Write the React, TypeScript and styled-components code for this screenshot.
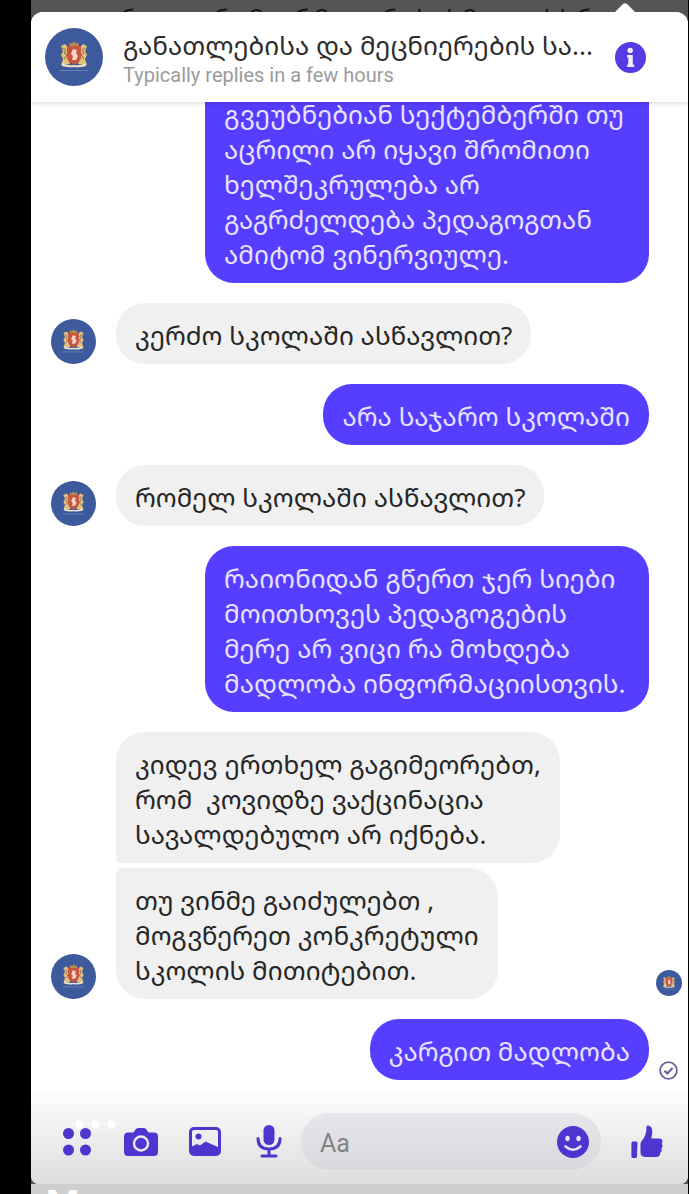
import React from "react";
import styled, { createGlobalStyle, css } from "styled-components";

const GlobalStyle = createGlobalStyle`
  * { box-sizing: border-box; }
  body {
    margin: 0;
    background: #000;
    font-family: "Noto Sans Georgian", Roboto, "Noto Sans", sans-serif;
  }
  button {
    border: 0;
    padding: 0;
    background: none;
    cursor: pointer;
  }
  svg { display: block; }
`;

const accent = "#4f35d0";

const Screen = styled.div`
  display: flex;
  flex-direction: column;
  min-height: 100vh;
  margin: 0 1px 0 31px;
  background: #555;
`;

const BackdropTop = styled.div`
  position: relative;
  height: 12px;
`;

const BackdropLine = styled.div`
  height: 12px;
  padding-left: 88px;
  overflow: hidden;
  white-space: nowrap;
  color: #161616;
  font-size: 26px;
  line-height: 36px;
`;

const Caret = styled.svg`
  position: absolute;
  right: 53px;
  bottom: 0;
`;

const Panel = styled.main`
  display: flex;
  flex: 1;
  flex-direction: column;
  overflow: hidden;
  border-radius: 12px 12px 8px 8px;
  background: #fff;
`;

const Header = styled.header`
  position: relative;
  z-index: 1;
  display: flex;
  align-items: center;
  gap: 20px;
  height: 90px;
  padding: 0 42px 0 14px;
  background: #fff;
  box-shadow: 0 1px 5px rgba(0, 0, 0, 0.16);
`;

const Heading = styled.div`
  flex: 1;
  min-width: 0;
`;

const Title = styled.h1`
  margin: 0;
  overflow: hidden;
  white-space: nowrap;
  color: #2c2c2c;
  font-size: 26px;
  font-weight: 400;
  line-height: 35px;
`;

const Subtitle = styled.p`
  margin: 0;
  color: #9b9b9b;
  font-family: Roboto, sans-serif;
  font-size: 20px;
  line-height: 24px;
`;

const Chat = styled.section`
  display: flex;
  flex: 1;
  flex-direction: column;
  gap: 20px;
  overflow: hidden;
  padding-bottom: 10px;
`;

const Row = styled.div<{ $sent?: boolean; $scrolled?: boolean }>`
  display: flex;
  align-items: flex-end;
  justify-content: ${(p) => (p.$sent ? "flex-end" : "flex-start")};
  padding-left: 20px;
  margin-top: ${(p) => (p.$scrolled ? "-20px" : "0")};
`;

const Stack = styled.div`
  display: flex;
  flex: 1;
  flex-direction: column;
  align-items: flex-start;
  gap: 5px;
  margin-left: 20px;
`;

const Bubble = styled.p<{ $sent?: boolean; $join?: "top" | "bottom" }>`
  margin: 0;
  padding: 15px 19px 11px;
  border-radius: 29px;
  white-space: pre-wrap;
  font-size: 26px;
  line-height: 35px;
  ${(p) =>
    p.$sent
      ? css`
          max-width: 444px;
          background: #553eff;
          color: #e9e2ff;
        `
      : css`
          max-width: 450px;
          background: #f0f0f0;
          color: #262626;
        `}
  ${(p) => p.$join === "bottom" && "border-bottom-left-radius: 5px;"}
  ${(p) => p.$join === "top" && "border-top-left-radius: 5px;"}
  ${(p) => p.$join === "top" && p.$sent && "border-top-right-radius: 5px;"}
`;

const Status = styled.div<{ $raised?: boolean }>`
  display: flex;
  flex: none;
  justify-content: center;
  width: 39px;
  padding-bottom: ${(p) => (p.$raised ? "3px" : "0")};
`;

const Composer = styled.form`
  position: relative;
  display: flex;
  align-items: center;
  height: 94px;
  padding: 9px 9px 0 14px;
  background: linear-gradient(#fefefe, #f2f2f2 35%, #dedede);
`;

const Tool = styled.button`
  display: flex;
  flex: none;
  align-items: center;
  justify-content: center;
  width: 64px;
  height: 57px;
  color: ${accent};
`;

const Field = styled.label`
  display: flex;
  flex: 1;
  align-items: center;
  min-width: 0;
  height: 57px;
  margin-right: 14px;
  padding: 0 12px 0 19px;
  border-radius: 29px;
  background: linear-gradient(#e6e7ea, #d8d9dc);
`;

const TextInput = styled.input`
  flex: 1;
  min-width: 0;
  border: 0;
  outline: 0;
  padding: 4px 0 0;
  background: none;
  color: #333;
  font-family: Roboto, sans-serif;
  font-size: 25px;
  &::placeholder {
    color: #828385;
    opacity: 1;
  }
`;

const EmojiButton = styled.button`
  color: ${accent};
`;

const FaintDots = styled.svg`
  position: absolute;
  left: 44px;
  top: 30px;
`;

const BackdropBottom = styled.div`
  height: 10px;
  padding-left: 15px;
  overflow: hidden;
  background: #cfcfcf;
  color: #fff;
  font-family: Roboto, sans-serif;
  font-size: 38px;
  font-weight: 700;
  line-height: 42px;
`;

function Avatar({ size }: { size: number }) {
  return (
    <svg width={size} height={size} viewBox="0 0 58 58" role="img" aria-label="Ministry emblem">
      <circle cx="29" cy="29" r="29" fill="#3c5a9c" />
      <path d="M24 18l1-4 2 2 2-3 2 3 2-2 1 4z" fill="#b98a55" />
      <path d="M16 18l4-2 3 3 1 5-1 6 2 6-9 1 2-6-2-4 2-4z" fill="#e3c07c" />
      <path d="M42 18l-4-2-3 3-1 5 1 6-2 6 9 1-2-6 2-4-2-4z" fill="#e3c07c" />
      <path d="M18 20l3 2-2 3 3 2-3 4M40 20l-3 2 2 3-3 2 3 4" fill="none" stroke="#8c6a4c" strokeWidth="1" />
      <path d="M22 18h14v11c0 4-4 6-7 8-3-2-7-4-7-8z" fill="#c9553f" />
      <path d="M28 21l4 1-1 3 2 3-2 4h-4l1-4-2-2z" fill="#f6d6c8" />
      <path d="M17 35q6 3 12 2 6 1 12-2v3q-6 2-12 1-6 1-12-1z" fill="#efe2c4" />
      <path d="M15 42.500h28" stroke="#6481b8" strokeWidth="1.200" />
    </svg>
  );
}

function InfoIcon() {
  return (
    <svg width="31" height="31" viewBox="0 0 31 31">
      <circle cx="15.500" cy="15.500" r="15.500" fill="#553be6" />
      <circle cx="15.200" cy="8.500" r="2.700" fill="#f1edff" />
      <path d="M12 13h5.800v9.500h1.400V25h-7v-2.500h1V15.500H12z" fill="#f1edff" />
    </svg>
  );
}

function SentIcon() {
  return (
    <svg width="19" height="19" viewBox="0 0 19 19" fill="none" stroke="#6a5f96" strokeWidth="1.800" role="img" aria-label="Sent">
      <circle cx="9.500" cy="9.500" r="8.400" />
      <path d="M5.500 9.700l2.800 2.700 5.300-5.500" strokeWidth="2.200" />
    </svg>
  );
}

function DotsIcon() {
  return (
    <svg width="28" height="28" viewBox="0 0 28 28" fill="currentColor">
      <circle cx="5.500" cy="5.500" r="5.500" />
      <circle cx="22.500" cy="5.500" r="5.500" />
      <circle cx="5.500" cy="22" r="5.500" />
      <circle cx="22.500" cy="22" r="5.500" />
    </svg>
  );
}

function CameraIcon() {
  return (
    <svg width="34" height="28" viewBox="0 0 34 28">
      <path
        fill="currentColor"
        d="M4 4.500h5.500l2-3Q12.500 0 14 0h6q1.500 0 2.500 1.500l2 3H30q4 0 4 4V24q0 4-4 4H4q-4 0-4-4V8.500q0-4 4-4z"
      />
      <circle cx="17" cy="15.500" r="7" fill="none" stroke="#ece9f4" strokeWidth="2.400" />
    </svg>
  );
}

function ImageIcon() {
  return (
    <svg width="32" height="29" viewBox="0 0 32 29">
      <rect x="1.500" y="1.500" width="29" height="26" rx="3.500" fill="none" stroke="currentColor" strokeWidth="3" />
      <circle cx="9.500" cy="9.500" r="3" fill="currentColor" />
      <path d="M2 20l6-3 3 1.500 5.500-4 13.500 6V27H2z" fill="currentColor" />
    </svg>
  );
}

function MicIcon() {
  return (
    <svg width="26" height="33" viewBox="0 0 26 33">
      <rect x="7.500" y="0" width="11" height="20" rx="5.500" fill="currentColor" />
      <path
        d="M2 13.500q0 10.500 11 10.500t11-10.500M13 24v6M6 31h14"
        fill="none"
        stroke="currentColor"
        strokeWidth="3"
        strokeLinecap="round"
      />
    </svg>
  );
}

function SmileIcon() {
  return (
    <svg width="32" height="32" viewBox="0 0 32 32">
      <circle cx="16" cy="16" r="16" fill="currentColor" />
      <ellipse cx="10.500" cy="12.500" rx="2.200" ry="2.800" fill="#e4e2f0" />
      <ellipse cx="21.500" cy="12.500" rx="2.200" ry="2.800" fill="#e4e2f0" />
      <path d="M8.500 20.500q7.500 6.500 15 0" fill="none" stroke="#e4e2f0" strokeWidth="2.600" strokeLinecap="round" />
    </svg>
  );
}

function ThumbIcon() {
  return (
    <svg width="32" height="34" viewBox="0 0 32 34" fill="currentColor">
      <path d="M1.800 16.500H5q1.600 0 1.500 1.500L6 31.500Q6 33 4.500 33H2Q.4 33 .4 31.500V18q0-1.500 1.400-1.500z" />
      <path d="M15.500 1.500q.3-1.300 1.800-1 4 1 4 6 0 3-1 7H28q3.500 0 3.500 3 0 1.500-.8 2.300 1 1 .8 2.700-.2 1.500-1.300 2.200.8 1.200.4 2.600-.4 1.200-1.500 1.800.4 3.900-4.100 3.900h-10q-5.500 0-5.500-4.500V19q0-2 1.500-3.500 4.500-4.500 4.500-14z" />
    </svg>
  );
}

export default function App() {
  return (
    <>
      <GlobalStyle />
      <Screen>
        <BackdropTop aria-hidden="true">
          <BackdropLine>რეაულრუმეარმ ეაურასასმ ეულსსრ</BackdropLine>
          <Caret width="20" height="9" viewBox="0 0 20 9">
            <path d="M0 9l8-8q2-1.500 4 0l8 8z" fill="#fff" />
          </Caret>
        </BackdropTop>

        <Panel>
          <Header>
            <Avatar size={58} />
            <Heading>
              <Title>განათლებისა და მეცნიერების სა...</Title>
              <Subtitle>Typically replies in a few hours</Subtitle>
            </Heading>
            <button type="button" aria-label="Information">
              <InfoIcon />
            </button>
          </Header>

          <Chat>
            <Row $sent $scrolled>
              <Bubble $sent $join="top">
                გვეუბნებიან სექტემბერში თუ აცრილი არ იყავი შრომითი ხელშეკრულება არ გაგრძელდება პედაგოგთან ამიტომ ვინერვიულე.
              </Bubble>
              <Status />
            </Row>
            <Row>
              <Avatar size={45} />
              <Stack>
                <Bubble>კერძო სკოლაში ასწავლით?</Bubble>
              </Stack>
            </Row>
            <Row $sent>
              <Bubble $sent>არა საჯარო სკოლაში</Bubble>
              <Status />
            </Row>
            <Row>
              <Avatar size={45} />
              <Stack>
                <Bubble>რომელ სკოლაში ასწავლით?</Bubble>
              </Stack>
            </Row>
            <Row $sent>
              <Bubble $sent>
                რაიონიდან გწერთ ჯერ სიები მოითხოვეს პედაგოგების მერე არ ვიცი რა მოხდება მადლობა ინფორმაციისთვის.
              </Bubble>
              <Status />
            </Row>
            <Row>
              <Avatar size={45} />
              <Stack>
                <Bubble $join="bottom">
                  {"კიდევ ერთხელ გაგიმეორებთ,\nრომ  კოვიდზე ვაქცინაცია\nსავალდებულო არ იქნება."}
                </Bubble>
                <Bubble $join="top">
                  {"თუ ვინმე გაიძულებთ ,\nმოგვწერეთ კონკრეტული\nსკოლის მითიტებით."}
                </Bubble>
              </Stack>
              <Status $raised>
                <Avatar size={26} />
              </Status>
            </Row>
            <Row $sent>
              <Bubble $sent>კარგით მადლობა</Bubble>
              <Status>
                <SentIcon />
              </Status>
            </Row>
          </Chat>

          <Composer onSubmit={(e) => e.preventDefault()}>
            <Tool type="button" aria-label="More actions">
              <DotsIcon />
            </Tool>
            <Tool type="button" aria-label="Camera">
              <CameraIcon />
            </Tool>
            <Tool type="button" aria-label="Gallery">
              <ImageIcon />
            </Tool>
            <Tool type="button" aria-label="Voice message">
              <MicIcon />
            </Tool>
            <Field>
              <TextInput type="text" placeholder="Aa" aria-label="Message" />
              <EmojiButton type="button" aria-label="Emoji">
                <SmileIcon />
              </EmojiButton>
            </Field>
            <Tool type="button" aria-label="Like">
              <ThumbIcon />
            </Tool>
            <FaintDots width="42" height="9" viewBox="0 0 42 9" fill="#fff" aria-hidden="true">
              <circle cx="4.500" cy="4.500" r="4.200" />
              <circle cx="20.500" cy="4.500" r="4.200" />
              <circle cx="36.500" cy="4.500" r="4.200" />
            </FaintDots>
          </Composer>
        </Panel>

        <BackdropBottom aria-hidden="true">M</BackdropBottom>
      </Screen>
    </>
  );
}
